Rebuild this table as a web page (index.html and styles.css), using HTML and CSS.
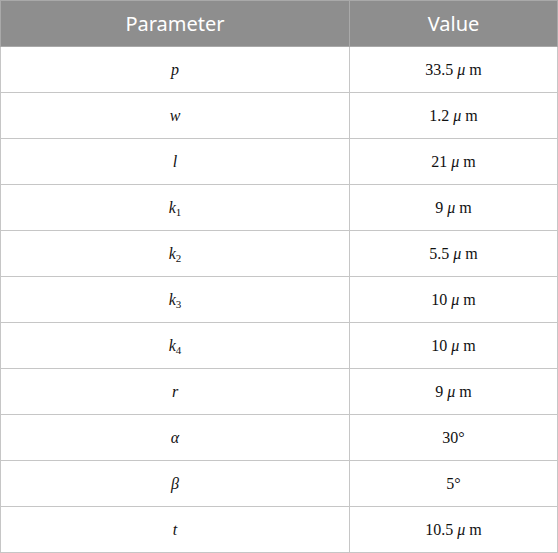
FILE: index.html
```html
<!DOCTYPE html>
<html>
<head>
<meta charset="utf-8">
<link rel="stylesheet" href="styles.css">
</head>
<body>
<table class="params">
  <thead>
    <tr><th>Parameter</th><th>Value</th></tr>
  </thead>
  <tbody>
    <tr><td><i>p</i></td><td>33.5 <i>μ</i> m</td></tr>
    <tr><td><i>w</i></td><td>1.2 <i>μ</i> m</td></tr>
    <tr><td><i>l</i></td><td>21 <i>μ</i> m</td></tr>
    <tr><td><i>k</i><sub>1</sub></td><td>9 <i>μ</i> m</td></tr>
    <tr><td><i>k</i><sub>2</sub></td><td>5.5 <i>μ</i> m</td></tr>
    <tr><td><i>k</i><sub>3</sub></td><td>10 <i>μ</i> m</td></tr>
    <tr><td><i>k</i><sub>4</sub></td><td>10 <i>μ</i> m</td></tr>
    <tr><td><i>r</i></td><td>9 <i>μ</i> m</td></tr>
    <tr><td><i>α</i></td><td>30°</td></tr>
    <tr><td><i>β</i></td><td>5°</td></tr>
    <tr><td><i>t</i></td><td>10.5 <i>μ</i> m</td></tr>
  </tbody>
</table>
</body>
</html>
```

FILE: styles.css
```css
html, body {
  margin: 0;
  padding: 0;
  background: #ffffff;
}
.params {
  width: 558px;
  border-collapse: collapse;
  table-layout: fixed;
}
.params th, .params td {
  border: 1px solid #c6c6c6;
  height: 46px;
  padding: 0;
  text-align: center;
  vertical-align: middle;
  box-sizing: border-box;
}
.params th:first-child, .params td:first-child {
  width: 349px;
}
.params th {
  background: #8e8e8e;
  color: #ffffff;
  font-family: "Noto Sans", "Open Sans", sans-serif;
  font-weight: 400;
  font-size: 20px;
  border-color: #a9a9a9;
}
.params td {
  color: #111111;
  font-family: "Liberation Serif", "DejaVu Serif", serif;
  font-size: 16px;
}
.params td i {
  font-style: italic;
}
.params sub {
  font-size: 11px;
  vertical-align: -3px;
  line-height: 0;
}
```
